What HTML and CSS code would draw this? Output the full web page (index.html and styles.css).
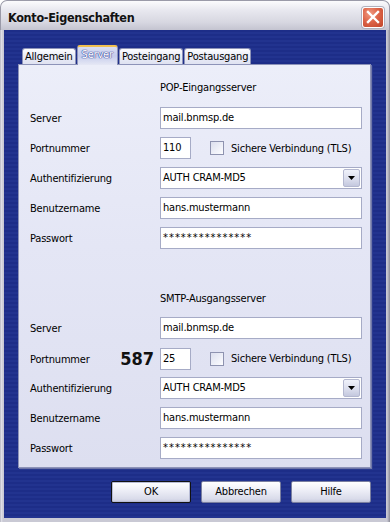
FILE: index.html
```html
<!DOCTYPE html>
<html lang="de">
<head>
<meta charset="utf-8">
<title>Konto-Eigenschaften</title>
<link rel="stylesheet" href="styles.css">
</head>
<body>
<div class="window">
  <div class="titlebar">
    <span class="title">Konto-Eigenschaften</span>
    <div class="close">
      <svg width="22" height="21" viewBox="0 0 22 21"><path d="M6 5 L16 15 M16 5 L6 15" stroke="#fff" stroke-width="2.4" stroke-linecap="square" fill="none"/></svg>
    </div>
  </div>
  <div class="body">
    <div class="tabs">
      <div class="tab">Allgemein</div>
      <div class="tab active">Server</div>
      <div class="tab">Posteingang</div>
      <div class="tab">Postausgang</div>
    </div>
    <div class="panel">
      <div class="section-title">POP-Eingangsserver</div>
      <div class="rows">
        <div class="row"><span class="label">Server</span><div class="field">mail.bnmsp.de</div></div>
        <div class="row"><span class="label">Portnummer</span><div class="portline"><div class="field port">110</div><span class="check"></span><span class="check-text">Sichere Verbindung (TLS)</span></div></div>
        <div class="row"><span class="label">Authentifizierung</span><div class="field select">AUTH CRAM-MD5<span class="drop"><svg width="7" height="4" viewBox="0 0 7 4"><path d="M0 0 H7 L3.5 4 Z" fill="#000"/></svg></span></div></div>
        <div class="row"><span class="label">Benutzername</span><div class="field">hans.mustermann</div></div>
        <div class="row"><span class="label">Passwort</span><div class="field pw">***************</div></div>
      </div>
      <div class="section-title second">SMTP-Ausgangsserver</div>
      <div class="rows">
        <div class="row"><span class="label">Server</span><div class="field">mail.bnmsp.de</div></div>
        <div class="row"><span class="label">Portnummer<b class="note">587</b></span><div class="portline"><div class="field port">25</div><span class="check"></span><span class="check-text">Sichere Verbindung (TLS)</span></div></div>
        <div class="row"><span class="label">Authentifizierung</span><div class="field select">AUTH CRAM-MD5<span class="drop"><svg width="7" height="4" viewBox="0 0 7 4"><path d="M0 0 H7 L3.5 4 Z" fill="#000"/></svg></span></div></div>
        <div class="row"><span class="label">Benutzername</span><div class="field">hans.mustermann</div></div>
        <div class="row"><span class="label">Passwort</span><div class="field pw">***************</div></div>
      </div>
    </div>
    <div class="buttons">
      <div class="btn default">OK</div>
      <div class="btn">Abbrechen</div>
      <div class="btn">Hilfe</div>
    </div>
  </div>
</div>
</body>
</html>
```
FILE: styles.css
```css
* { box-sizing: border-box; }
html, body { margin: 0; padding: 0; background: #fff; }
body {
  font-family: Tahoma, "DejaVu Sans Condensed", "DejaVu Sans", sans-serif;
  font-size: 11px;
  letter-spacing: -0.2px;
  color: #000;
}
.window {
  width: 390px;
  height: 522px;
  display: flex;
  flex-direction: column;
  background: linear-gradient(to right, #9fa0ac 0, #e4e4ec 1px, #c9c9d4 3px, #c9c9d4 calc(100% - 3px), #8c8c98 100%);
  border-radius: 7px 7px 0 0;
  overflow: hidden;
}
.titlebar {
  height: 30px;
  flex: none;
  display: flex;
  align-items: center;
  justify-content: space-between;
  padding: 0 5px 0 7px;
  background: linear-gradient(to bottom, #fbfbfd 0, #e9e9f0 30%, #d6d6e0 75%, #c4c4d0 100%);
  border: 1px solid #9a9aa8;
  border-bottom: none;
  border-radius: 7px 7px 0 0;
}
.title {
  font-family: "DejaVu Sans Condensed", "DejaVu Sans", sans-serif;
  font-weight: bold;
  font-size: 12.5px;
  letter-spacing: -0.3px;
  color: #111;
  padding-top: 4px;
}
.close {
  width: 22px;
  height: 21px;
  margin-top: 4px;
  border-radius: 3px;
  border: 1px solid #fff;
  background: radial-gradient(circle at 35% 30%, #f09a82 0, #dd6448 45%, #c1442a 100%);
  box-shadow: 0 0 0 1px #b0b0bc;
  display: flex;
  align-items: center;
  justify-content: center;
}
.close svg { display: block; margin: -1px; }
.body {
  flex: 1;
  margin: 0 4px 4px 4px;
  background: repeating-linear-gradient(to bottom, #1d2d88 0, #1d2d88 2px, #22338f 2px, #22338f 4px);
  padding: 15px 15px 0 14px;
  display: flex;
  flex-direction: column;
}
.tabs {
  display: flex;
  align-items: flex-end;
  height: 19px;
  padding-left: 4px;
  position: relative;
  z-index: 1;
}
.tab {
  height: 16px;
  padding: 0 2px;
  margin-right: 1px;
  line-height: 15px;
  background: linear-gradient(to bottom, #fdfdff 0, #eceef8 40%, #dfe2f1 100%);
  border: 1px solid #8d93b8;
  border-bottom: none;
  border-radius: 3px 3px 0 0;
  color: #000;
}
.tab.active {
  height: 20px;
  margin: 0 1px 0 0;
  padding: 0 4px;
  line-height: 16px;
  background: linear-gradient(to bottom, #d9def3 0, #c6cdec 50%, #e6e8f5 100%);
  border-top: 2px solid #f0c050;
  color: #fff;
  text-shadow: 0 0 1px #38449a, 0 0 1px #38449a, 0 0 1px #38449a;
  margin-bottom: -1px;
}
.panel {
  height: 404px;
  background: linear-gradient(to bottom, #eceef9 0, #e4e6f5 45%, #dddff0 100%);
  border: 1px solid #8d93b8;
  box-shadow: 1px 1px 0 #6f76a8, 2px 2px 0 #2a3a90;
  padding: 16px 9px 0 11px;
}
.section-title {
  padding-left: 130px;
  height: 13px;
  line-height: 13px;
  margin-bottom: 13px;
}
.section-title.second {
  margin-top: 43px;
  margin-bottom: 12px;
}
.rows {
  display: flex;
  flex-direction: column;
  gap: 8px;
}
.row {
  display: grid;
  grid-template-columns: 130px 202px;
  height: 22px;
  align-items: center;
}
.label {
  display: flex;
  align-items: center;
  justify-content: space-between;
  padding-right: 6px;
  padding-top: 1px;
}
.note {
  font-family: "DejaVu Sans Condensed", "DejaVu Sans", sans-serif;
  font-weight: bold;
  font-size: 18px;
  letter-spacing: 0;
  color: #111;
  line-height: 22px;
}
.field {
  height: 22px;
  background: #fff;
  border: 1px solid #a6abc6;
  line-height: 20px;
  padding-left: 2px;
  position: relative;
}
.field.pw { font-size: 11px; letter-spacing: 1px; }
.portline {
  display: flex;
  align-items: center;
}
.field.port { width: 31px; }
.check {
  width: 14px;
  height: 14px;
  margin-left: 19px;
  border: 1px solid #8e93b0;
  background: linear-gradient(135deg, #dcdfee 0, #f6f7fc 80%, #fff 100%);
}
.check-text { margin-left: 7px; }
.drop {
  position: absolute;
  top: 1px;
  right: 1px;
  width: 17px;
  height: 18px;
  border: 1px solid #b4b8d0;
  border-radius: 2px;
  background: linear-gradient(to bottom, #f0f2fa 0, #d9dcec 60%, #c4c8de 100%);
  display: flex;
  align-items: center;
  justify-content: center;
}
.drop svg { display: block; }
.buttons {
  display: flex;
  justify-content: flex-end;
  gap: 10px;
  margin-top: 13px;
  padding-right: 0;
}
.btn {
  width: 80px;
  height: 22px;
  line-height: 20px;
  text-align: center;
  border: 1px solid #7a7fa0;
  border-radius: 2px;
  background: linear-gradient(to bottom, #ffffff 0, #eeeff7 40%, #d9dbea 85%, #c4c7dc 100%);
  color: #000;
}
.btn.default {
  border: 1px solid #111;
  box-shadow: inset 0 0 0 1px #b8bcd6;
}
```
